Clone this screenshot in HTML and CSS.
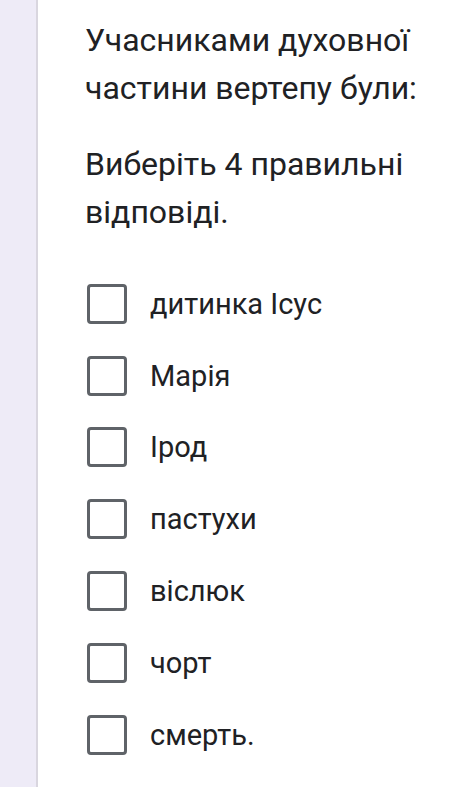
FILE: index.html
```html
<!DOCTYPE html>
<html lang="uk">
<head>
<meta charset="utf-8">
<link rel="stylesheet" href="styles.css">
</head>
<body>
<div class="page">
  <div class="rail"></div>
  <main class="content">
    <p class="question">Учасниками духовної частини вертепу були:</p>
    <p class="hint">Виберіть 4 правильні відповіді.</p>
    <ul class="options">
      <li class="option"><span class="box"></span><span class="label">дитинка Ісус</span></li>
      <li class="option"><span class="box"></span><span class="label">Марія</span></li>
      <li class="option"><span class="box"></span><span class="label">Ірод</span></li>
      <li class="option"><span class="box"></span><span class="label">пастухи</span></li>
      <li class="option"><span class="box"></span><span class="label">віслюк</span></li>
      <li class="option"><span class="box"></span><span class="label">чорт</span></li>
      <li class="option"><span class="box"></span><span class="label">смерть.</span></li>
    </ul>
  </main>
</div>
</body>
</html>
```
FILE: styles.css
```css
html, body {
  margin: 0;
  padding: 0;
  background: #ffffff;
}
body {
  font-family: Roboto, "Noto Sans", sans-serif;
  color: #202124;
}
.page {
  display: flex;
  min-height: 787px;
}
.rail {
  width: 36px;
  flex: 0 0 36px;
  background: #eeebf7;
  border-right: 2px solid #d9d6df;
}
.content {
  flex: 1;
  padding: 16px 10px 0 47px;
}
.question, .hint {
  margin: 0;
  font-size: 32px;
  line-height: 48px;
  max-width: 380px;
}
.hint {
  margin-top: 28px;
}
.options {
  list-style: none;
  margin: 32px 0 0 2px;
  padding: 0;
}
.option {
  display: flex;
  align-items: center;
  height: 71.8px;
}
.box {
  box-sizing: border-box;
  width: 40px;
  height: 40px;
  border: 3.5px solid #5f6368;
  border-radius: 4px;
  flex: 0 0 40px;
}
.label {
  margin-left: 23px;
  font-size: 29px;
}
```
